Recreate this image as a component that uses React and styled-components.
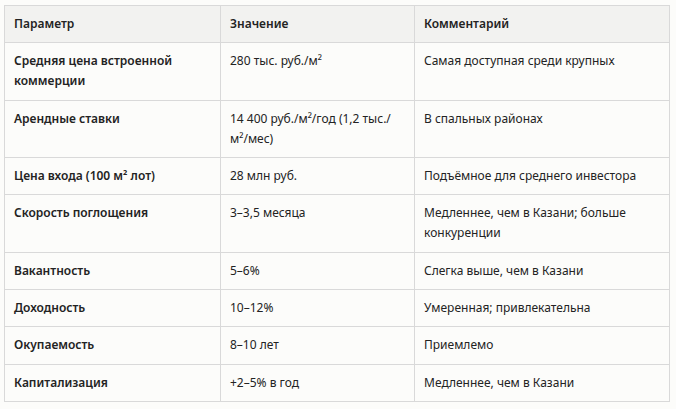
import React from "react"
import styled, { createGlobalStyle } from "styled-components"

const rows = [
  ["Средняя цена встроенной коммерции", "280 тыс. руб./м²", "Самая доступная среди крупных"],
  ["Арендные ставки", "14 400 руб./м²/год (1,2 тыс./м²/мес)", "В спальных районах"],
  ["Цена входа (100 м² лот)", "28 млн руб.", "Подъёмное для среднего инвестора"],
  ["Скорость поглощения", "3–3,5 месяца", "Медленнее, чем в Казани; больше конкуренции"],
  ["Вакантность", "5–6%", "Слегка выше, чем в Казани"],
  ["Доходность", "10–12%", "Умеренная; привлекательна"],
  ["Окупаемость", "8–10 лет", "Приемлемо"],
  ["Капитализация", "+2–5% в год", "Медленнее, чем в Казани"],
]

const columns = [
  { title: "Параметр", width: 216 },
  { title: "Значение", width: 194 },
  { title: "Комментарий", width: 255 },
]

const GlobalStyle = createGlobalStyle`
  body {
    margin: 0;
    background: #fcfcfa;
    font-family: "Noto Sans", "Open Sans", sans-serif;
    color: #232323;
  }
`

const Page = styled.div`
  padding: 5px 0 0 4px;
`

const Table = styled.table`
  border-collapse: collapse;
  table-layout: fixed;
  width: 665px;
  font-size: 12px;
  line-height: 20px;
`

const Head = styled.th`
  background: #f2f2f0;
  border: 1px solid #d9d9d9;
  padding: 8px 8px 8.33px 9px;
  text-align: left;
  font-weight: 600;
`

const Cell = styled.td`
  border: 1px solid #d9d9d9;
  padding: 8px 8px 8.33px 9px;
  vertical-align: top;
  font-weight: ${({ $strong }) => ($strong ? 600 : 400)};
`

const App = () => {
  return (
    <Page>
      <GlobalStyle />
      <Table>
        <colgroup>
          {columns.map((c) => (
            <col key={c.title} style={{ width: c.width }} />
          ))}
        </colgroup>
        <thead>
          <tr>
            {columns.map((c) => (
              <Head key={c.title}>{c.title}</Head>
            ))}
          </tr>
        </thead>
        <tbody>
          {rows.map(([param, value, note]) => (
            <tr key={param}>
              <Cell $strong>{param}</Cell>
              <Cell>{value}</Cell>
              <Cell>{note}</Cell>
            </tr>
          ))}
        </tbody>
      </Table>
    </Page>
  )
}

export default App
